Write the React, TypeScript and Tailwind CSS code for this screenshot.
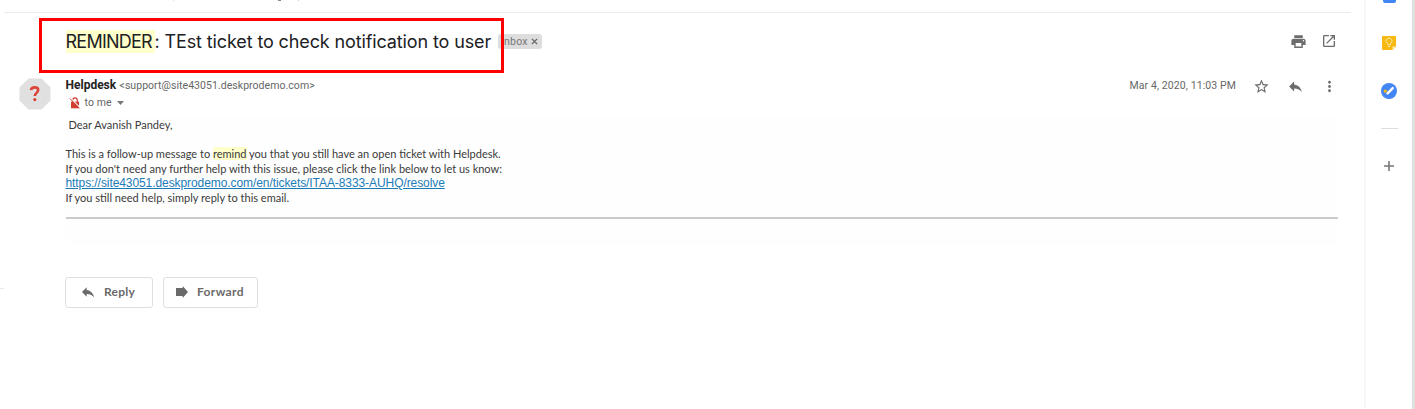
import type { ReactNode } from "react";

function Icon({ d, size = 16 }: { d: string; size?: number }) {
  return (
    <svg viewBox="0 0 24 24" width={size} height={size} className="shrink-0" fill="currentColor">
      <path d={d} />
    </svg>
  );
}

const PRINT = "M19 8H5c-1.66 0-3 1.34-3 3v6h4v4h12v-4h4v-6c0-1.66-1.34-3-3-3zm-3 11H8v-5h8v5zm3-7c-.55 0-1-.45-1-1s.45-1 1-1 1 .45 1 1-.45 1-1 1zm-1-9H6v4h12V3z";
const OPEN = "M19 19H5V5h7V3H5a2 2 0 0 0-2 2v14a2 2 0 0 0 2 2h14c1.1 0 2-.9 2-2v-7h-2v7zM14 3v2h3.59l-9.83 9.83 1.41 1.41L19 6.41V10h2V3h-7z";
const STAR = "M22 9.24l-7.19-.62L12 2 9.19 8.63 2 9.24l5.46 4.73L5.82 21 12 17.27 18.18 21l-1.63-7.03L22 9.24zM12 15.4l-3.76 2.27 1-4.28-3.32-2.88 4.38-.38L12 6.1l1.71 4.04 4.38.38-3.32 2.88 1 4.28L12 15.4z";
const REPLY = "M10 9V5l-7 7 7 7v-4.1c5 0 8.5 1.6 11 5.1-1-5-4-10-11-11z";
const FORWARD = "M3 6h10V3l8 9-8 9v-3H3z";
const MORE = "M12 8a2 2 0 1 0 0-4 2 2 0 0 0 0 4zm0 2a2 2 0 1 0 0 4 2 2 0 0 0 0-4zm0 6a2 2 0 1 0 0 4 2 2 0 0 0 0-4z";

function Subject() {
  return (
    <div className="relative flex h-[57px] items-center pr-[27px] pl-[65.5px]">
      <h1 className="w-[424.5px] font-['Inter',sans-serif] text-[18px] leading-[23px] tracking-[-0.12px] whitespace-nowrap text-[#202124]">
        <mark className="inline-block w-[89px] bg-[#ffffcb] tracking-[-0.75px] text-inherit">REMINDER</mark>: TEst ticket to check notification to user
      </h1>
      <div className="ml-2 flex h-[15px] w-[44px] shrink-0 items-center rounded-[3px] bg-[#dddddd] pl-[3px] font-['Roboto',sans-serif] text-[10.5px] leading-[15px] tracking-[0.2px] text-[#777]">
        Inbox
        <svg viewBox="0 0 8 8" width="7" height="7" className="ml-[3px] shrink-0" stroke="#666" strokeWidth="1.6">
          <path d="M1 1l6 6M7 1L1 7" />
        </svg>
      </div>
      <div className="ml-auto flex gap-[14px] text-[#6c6c6c]">
        <Icon d={PRINT} size={17} />
        <Icon d={OPEN} size={16} />
      </div>
      <div className="absolute top-[5px] left-[39px] h-[55px] w-[465px] border-[3px] border-[#fe0000]" />
    </div>
  );
}

function Avatar() {
  return (
    <svg viewBox="0 0 32 32" width="32" height="32" className="mt-[8px] shrink-0">
      <path d="M9.5 0.5h13l9 9v13l-9 9h-13l-9-9v-13z" fill="#e0e0e0" />
      <path d="M12 12.2C12.200 10.100 13.600 9.400 15.700 9.400c2.200 0 3.500 1 3.500 2.700 0 2.700-3.400 2.900-3.400 6" fill="none" stroke="#db4437" strokeWidth="2.6" />
      <circle cx="15.800" cy="21.600" r="1.600" fill="#db4437" />
    </svg>
  );
}

function NoLock() {
  return (
    <svg viewBox="0 0 12 12" width="12" height="12" className="shrink-0">
      <path d="M3.7 5V3.2a2.3 2.3 0 0 1 4.6 0V5" fill="none" stroke="#d23f31" strokeWidth="1.2" />
      <path d="M2 4.7h8v6.6H2z" fill="#d23f31" />
      <path d="M1.8 1.5l9.4 9.4" stroke="#fff" strokeWidth="1.1" />
      <path d="M.9 1.5l9.6 9.8" stroke="#d23f31" strokeWidth="1" />
    </svg>
  );
}

function Sender() {
  return (
    <header className="flex h-[47px] pr-[26px] pl-[19px] font-['Roboto',sans-serif] text-[10.5px] text-[#666]">
      <Avatar />
      <div className="ml-[14.5px] pt-[8px]">
        <div className="flex h-[15px] items-baseline leading-[15px] whitespace-nowrap">
          <b className="w-[54px] text-[12px] text-[#222]">Helpdesk</b>
          <span className="tracking-[0.05px]">&lt;support@site43051.deskprodemo.com&gt;</span>
        </div>
        <div className="mt-[2px] flex h-[15px] items-center pl-[3px] leading-[15px]">
          <NoLock />
          <span className="ml-[4px] tracking-[0.1px]">to me</span>
          <svg viewBox="0 0 7 4" width="7" height="4" className="ml-[5px]" fill="#777">
            <path d="M0 0h7L3.5 4z" />
          </svg>
        </div>
      </div>
      <div className="ml-auto flex h-[16px] items-center pt-[16px]">
        <span className="mr-[17px] tracking-[0.1px]">Mar 4, 2020, 11:03 PM</span>
        <div className="flex items-center gap-[17px] text-[#6c6c6c]">
          <Icon d={STAR} size={17} />
          <Icon d={REPLY} size={17} />
          <Icon d={MORE} size={17} />
        </div>
      </div>
    </header>
  );
}

function Line({ children }: { children?: ReactNode }) {
  return <p className="h-[14.6px] leading-[15px] whitespace-nowrap">{children}</p>;
}

function Message() {
  return (
    <article className="ml-[65.5px] h-[128px] w-[1272px] bg-[#fefefe] font-['Lato',sans-serif] text-[11px] text-[#3a3a3a]">
      <Line><span className="pl-[3px]">Dear Avanish Pandey,</span></Line>
      <Line />
      <Line>
        This is a follow-up message to <mark className="bg-[#ffffcb] text-inherit">remind</mark> you that you still have an open ticket with Helpdesk.
      </Line>
      <Line>If you don't need any further help with this issue, please click the link below to let us know:</Line>
      <Line>
        <a className="font-['Liberation_Sans',sans-serif] text-[12px] tracking-[-0.08px] text-[#1c7cb8] underline underline-offset-1">
          https://site43051.deskprodemo.com/en/tickets/ITAA-8333-AUHQ/resolve
        </a>
      </Line>
      <Line>If you still need help, simply reply to this email.</Line>
      <hr className="mt-[12.4px] border-t-2 border-[#cacaca]" />
    </article>
  );
}

function Action({ d, label, className }: { d: string; label: string; className: string }) {
  return (
    <button className={"flex h-[31px] items-center rounded-[3px] border border-[#dfdfdf] bg-white pb-[2px] font-['Lato',sans-serif] text-[12px] font-bold text-[#6a6a6a] " + className}>
      <Icon d={d} />
      {label}
    </button>
  );
}

function SideBar() {
  return (
    <aside className="flex w-[51px] shrink-0 flex-col items-center border-r-[3px] border-l-2 border-r-[#e0e0e0] border-l-[#f8f8f8]">
      <div className="h-[3px] w-[13px] rounded-b-[2px] bg-[#4285f4]" />
      <svg viewBox="0 0 14 14" width="14" height="14" className="mt-[33px] shrink-0">
        <path d="M1 0h12a1 1 0 0 1 1 1v9.5L10.5 14H1a1 1 0 0 1-1-1V1a1 1 0 0 1 1-1z" fill="#f5b912" />
        <path d="M14 10.5h-3.5V14z" fill="#fde9a9" />
        <path d="M5.8 8.7V7.6a2.900 2.900 0 1 1 2.600 0v1.100zM5.900 10.400h2.400" fill="none" stroke="#fdeebb" strokeWidth=".9" />
      </svg>
      <svg viewBox="0 0 16 16" width="16" height="16" className="mt-[33px] shrink-0">
        <circle cx="8" cy="8" r="8" fill="#4285f4" />
        <path d="M6.6 10.3l5.1-5.1" stroke="#fff" strokeWidth="2.5" strokeLinecap="round" />
        <circle cx="4.3" cy="8.1" r="1.7" fill="#f9bb12" />
      </svg>
      <div className="mt-[29px] h-px w-[17px] bg-[#dedede]" />
      <svg viewBox="0 0 10 10" width="10" height="10" className="mt-[32px]" stroke="#777" strokeWidth="1.6">
        <path d="M5 0v10M0 5h10" />
      </svg>
    </aside>
  );
}

export default function App() {
  return (
    <div className="flex h-[409px] overflow-hidden bg-white">
      <main className="w-[1364px] shrink-0">
        <div className="flex h-[12px] items-start pl-[173px]">
          <i className="h-px w-px bg-[#ddd]" />
          <i className="ml-[104px] h-px w-[3px] bg-[#888]" />
          <i className="ml-[17px] h-px w-px bg-[#ccc]" />
        </div>
        <div className="mr-[13px] ml-[4px] h-px bg-[#ebebeb]" />
        <Subject />
        <Sender />
        <Message />
        <div className="flex items-end">
          <i className="mb-[19px] h-px w-[4px] bg-[#e8e8e8]" />
          <div className="flex gap-[10px] pt-[32px] pl-[61px]">
            <Action d={REPLY} label="Reply" className="w-[88px] gap-[8px] pl-[14px] tracking-[0.25px]" />
            <Action d={FORWARD} label="Forward" className="w-[95px] gap-[7px] pl-[10px] tracking-[0.35px]" />
          </div>
        </div>
      </main>
      <SideBar />
    </div>
  );
}
